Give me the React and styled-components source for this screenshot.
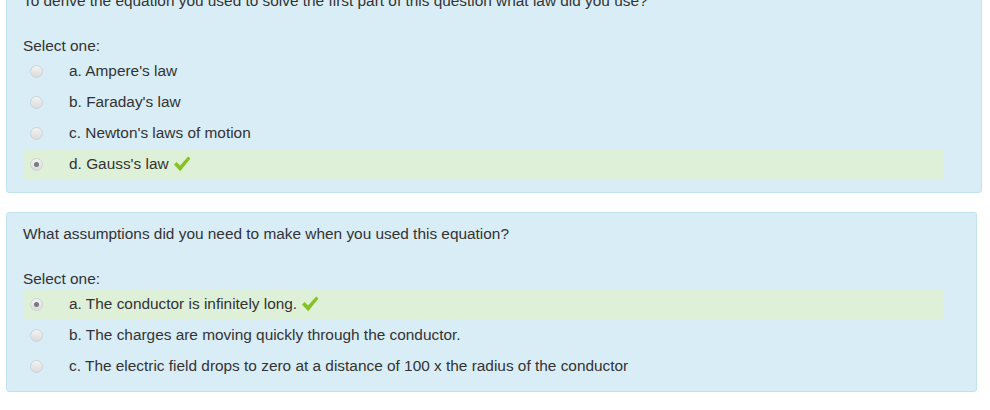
import React from 'react'
import styled, { createGlobalStyle } from 'styled-components'

const GlobalStyle = createGlobalStyle`
    html, body {
        margin: 0;
        padding: 0;
        background: #fff;
        overflow: hidden;
    }
    body {
        font-family: "Liberation Sans", Arial, sans-serif;
        font-size: 15.4px;
        color: #333;
    }
`

const questions = [
    {
        id: 1,
        text: 'To derive the equation you used to solve the first part of this question what law did you use?',
        width: 976,
        bottom: 13,
        options: [
            { key: 'a', label: "Ampere's law" },
            { key: 'b', label: "Faraday's law" },
            { key: 'c', label: "Newton's laws of motion" },
            { key: 'd', label: "Gauss's law", checked: true },
        ],
    },
    {
        id: 2,
        text: 'What assumptions did you need to make when you used this equation?',
        width: 971,
        bottom: 10,
        options: [
            { key: 'a', label: 'The conductor is infinitely long.', checked: true },
            { key: 'b', label: 'The charges are moving quickly through the conductor.' },
            { key: 'c', label: 'The electric field drops to zero at a distance of 100 x the radius of the conductor' },
        ],
    },
]

const CheckIcon = () => (
    <svg width="18" height="18" viewBox="0 0 18 18">
        <path d="M1 9.5 L3.6 7 L7 10.6 L15.2 1.5 L17.5 3.6 L7.2 16.2 Z" fill="#86c226" />
    </svg>
)

const Question = ({ q }) => (
    <Panel $width={q.width} $bottom={q.bottom}>
        <QText>{q.text}</QText>
        <Prompt>Select one:</Prompt>
        <Answers>
            {q.options.map(opt => (
                <Option key={opt.key} $correct={opt.checked}>
                    <Radio $checked={opt.checked} />
                    <Label>
                        {opt.key}. {opt.label}
                        {opt.checked && <Tick><CheckIcon /></Tick>}
                    </Label>
                </Option>
            ))}
        </Answers>
    </Panel>
)

const App = () => {
    return (
        <Page>
            <GlobalStyle />
            {questions.map(q => <Question q={q} key={q.id} />)}
        </Page>
    )
}

const Page = styled.div`
    display: flex;
    flex-direction: column;
    gap: 19px;
    padding-left: 6px;
    margin-top: -21px;
`

const Panel = styled.div`
    box-sizing: border-box;
    width: ${p => p.$width}px;
    background: #d9edf7;
    border: 1px solid #c1e3ef;
    border-radius: 3px;
    padding: 11px 16px ${p => p.$bottom}px 16px;
`

const QText = styled.div`
    line-height: 20px;
    margin-bottom: 25px;
`

const Prompt = styled.div`
    line-height: 20px;
`

const Answers = styled.div`
    display: flex;
    flex-direction: column;
    gap: 1px;
    width: 919px;
    margin-left: 1px;
`

const Option = styled.div`
    display: flex;
    align-items: center;
    height: 30px;
    padding-left: 6px;
    background: ${p => (p.$correct ? '#dff0d8' : 'transparent')};
`

const Radio = styled.span`
    position: relative;
    box-sizing: border-box;
    width: 13px;
    height: 13px;
    border-radius: 50%;
    border: 1px solid #cfd3d6;
    background: linear-gradient(#f2f2f2, #dcdcdc);
    margin-right: 26px;
    flex: none;

    &::after {
        content: '';
        display: ${p => (p.$checked ? 'block' : 'none')};
        position: absolute;
        left: 3px;
        top: 3px;
        width: 5px;
        height: 5px;
        border-radius: 50%;
        background: #7a7a7a;
    }
`

const Label = styled.span`
    display: flex;
    align-items: center;
    line-height: 20px;
    white-space: nowrap;
`

const Tick = styled.span`
    display: inline-flex;
    margin-left: 4px;
    margin-top: -1px;
`

export default App
